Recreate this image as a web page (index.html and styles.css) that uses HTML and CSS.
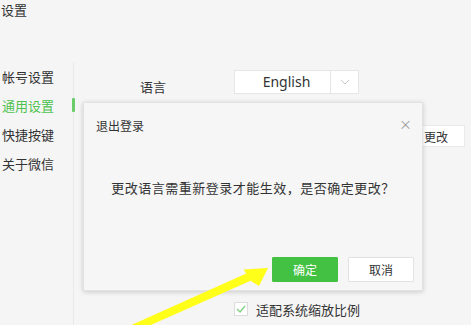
FILE: index.html
```html
<!DOCTYPE html>
<html lang="zh-CN">
<head>
<meta charset="utf-8">
<title>设置</title>
<link rel="stylesheet" href="styles.css">
</head>
<body>
<div class="app">
  <div class="header">设置</div>
  <div class="body">
    <nav class="sidebar">
      <div class="nav-item">帐号设置</div>
      <div class="nav-item active">通用设置</div>
      <div class="nav-item">快捷按键</div>
      <div class="nav-item">关于微信</div>
    </nav>
    <main class="content">
      <div class="row lang-row">
        <div class="label">语言</div>
        <div class="select">
          <span class="select-value">English</span>
          <span class="select-arrow">
            <svg width="10" height="6" viewBox="0 0 10 6"><path d="M1 1 L5 5 L9 1" fill="none" stroke="#c8c8c8" stroke-width="1"/></svg>
          </span>
        </div>
      </div>
      <div class="row btn-row">
        <button class="change-btn">更改</button>
      </div>
      <div class="spacer"></div>
      <div class="row check-row">
        <span class="checkbox">
          <svg width="10" height="8" viewBox="0 0 10 8"><path d="M1 4 L4 7 L9 1" fill="none" stroke="#7fcf7f" stroke-width="1.3"/></svg>
        </span>
        <span class="check-label">适配系统缩放比例</span>
      </div>
    </main>
  </div>

  <div class="dialog">
    <div class="dialog-head">
      <span class="dialog-title">退出登录</span>
      <span class="dialog-close">×</span>
    </div>
    <div class="dialog-msg">更改语言需重新登录才能生效，是否确定更改？</div>
    <div class="dialog-actions">
      <button class="btn btn-ok">确定</button>
      <button class="btn btn-cancel">取消</button>
    </div>
  </div>

  <svg class="arrow" width="471" height="325" viewBox="0 0 471 325">
    <polygon points="128.5,326.3 246.3,273.4 243.5,269.5 268,268 259,286 250.5,280.7 131.7,333.5" fill="#ffff1a"/>
  </svg>
</div>
</body>
</html>
```

FILE: styles.css
```css
* { box-sizing: border-box; }
html, body { margin: 0; padding: 0; }
body {
  background: #f5f5f5;
  font-family: "Noto Sans CJK SC", "Noto Sans", sans-serif;
  color: #333;
  width: 471px;
  height: 325px;
  overflow: hidden;
}
.app {
  position: relative;
  width: 471px;
  height: 325px;
  display: flex;
  flex-direction: column;
}
.header {
  height: 22px;
  font-size: 13px;
  line-height: 20px;
  padding-left: 1px;
  color: #333;
}
.body {
  flex: 1;
  display: flex;
  padding-top: 40px;
}
.sidebar {
  width: 74px;
  border-right: 1px solid #e8e8e8;
  display: flex;
  flex-direction: column;
}
.nav-item {
  height: 29px;
  line-height: 29px;
  font-size: 13px;
  padding-left: 2px;
  color: #333;
  position: relative;
}
.nav-item.active { color: #4ec24e; }
.nav-item.active::after {
  content: "";
  position: absolute;
  right: -2px;
  top: 7px;
  width: 3px;
  height: 14px;
  background: #6acd6a;
  border-radius: 1px;
}
.content {
  flex: 1;
  display: flex;
  flex-direction: column;
}
.row { display: flex; align-items: center; }
.lang-row {
  margin-top: 8px;
  height: 24px;
  padding-left: 66px;
}
.label {
  width: 94px;
  font-size: 13px;
  padding-top: 8px;
  color: #333;
}
.select {
  width: 125px;
  height: 24px;
  background: #fff;
  border: 1px solid #e6e6e6;
  display: flex;
}
.select-value {
  width: 96px;
  border-right: 1px solid #e6e6e6;
  text-align: center;
  font-family: "Noto Sans", "Open Sans", sans-serif;
  font-size: 14px;
  line-height: 22px;
  color: #333;
  padding-left: 8px;
}
.select-arrow {
  flex: 1;
  display: flex;
  align-items: center;
  justify-content: center;
}
.btn-row {
  margin-top: 31px;
  height: 22px;
  justify-content: flex-end;
  padding-right: 6px;
}
.change-btn {
  width: 60px;
  height: 22px;
  background: #fff;
  border: 1px solid #eaeaea;
  font-family: inherit;
  font-size: 12px;
  color: #333;
  padding: 0 0 0 2px;
}
.spacer { flex: 1; }
.check-row {
  height: 14px;
  margin-bottom: 9px;
  padding-left: 160px;
}
.checkbox {
  width: 14px;
  height: 14px;
  background: #fff;
  border: 1px solid #dcdcdc;
  display: flex;
  align-items: center;
  justify-content: center;
}
.check-label {
  margin-left: 8px;
  font-size: 13px;
  color: #333;
}
.dialog {
  position: absolute;
  left: 83px;
  top: 102px;
  width: 340px;
  height: 189px;
  background: #f6f6f6;
  border: 1px solid #e2e2e2;
  box-shadow: 0 1px 5px rgba(0,0,0,0.18);
  display: flex;
  flex-direction: column;
}
.dialog-head {
  height: 44px;
  display: flex;
  justify-content: space-between;
  align-items: flex-start;
  padding: 14px 10px 0 12px;
}
.dialog-title {
  font-size: 12px;
  color: #333;
  line-height: 18px;
}
.dialog-close {
  font-size: 13px;
  color: #9a9a9a;
  line-height: 14px;
}
.dialog-msg {
  text-align: center;
  font-size: 13px;
  letter-spacing: 0.5px;
  color: #333;
  margin-top: 31px;
  line-height: 20px;
}
.dialog-actions {
  margin-top: auto;
  margin-bottom: 8px;
  display: flex;
  justify-content: flex-end;
  gap: 10px;
  padding-right: 8px;
}
.btn {
  width: 66px;
  height: 25px;
  font-family: inherit;
  font-size: 12px;
  border-radius: 1px;
  padding: 0;
}
.btn-ok {
  background: #43c143;
  border: 1px solid #43c143;
  color: #fff;
}
.btn-cancel {
  background: #fff;
  border: 1px solid #e2e2e2;
  color: #333;
}
.arrow {
  position: absolute;
  left: 0;
  top: 0;
  pointer-events: none;
}
```
